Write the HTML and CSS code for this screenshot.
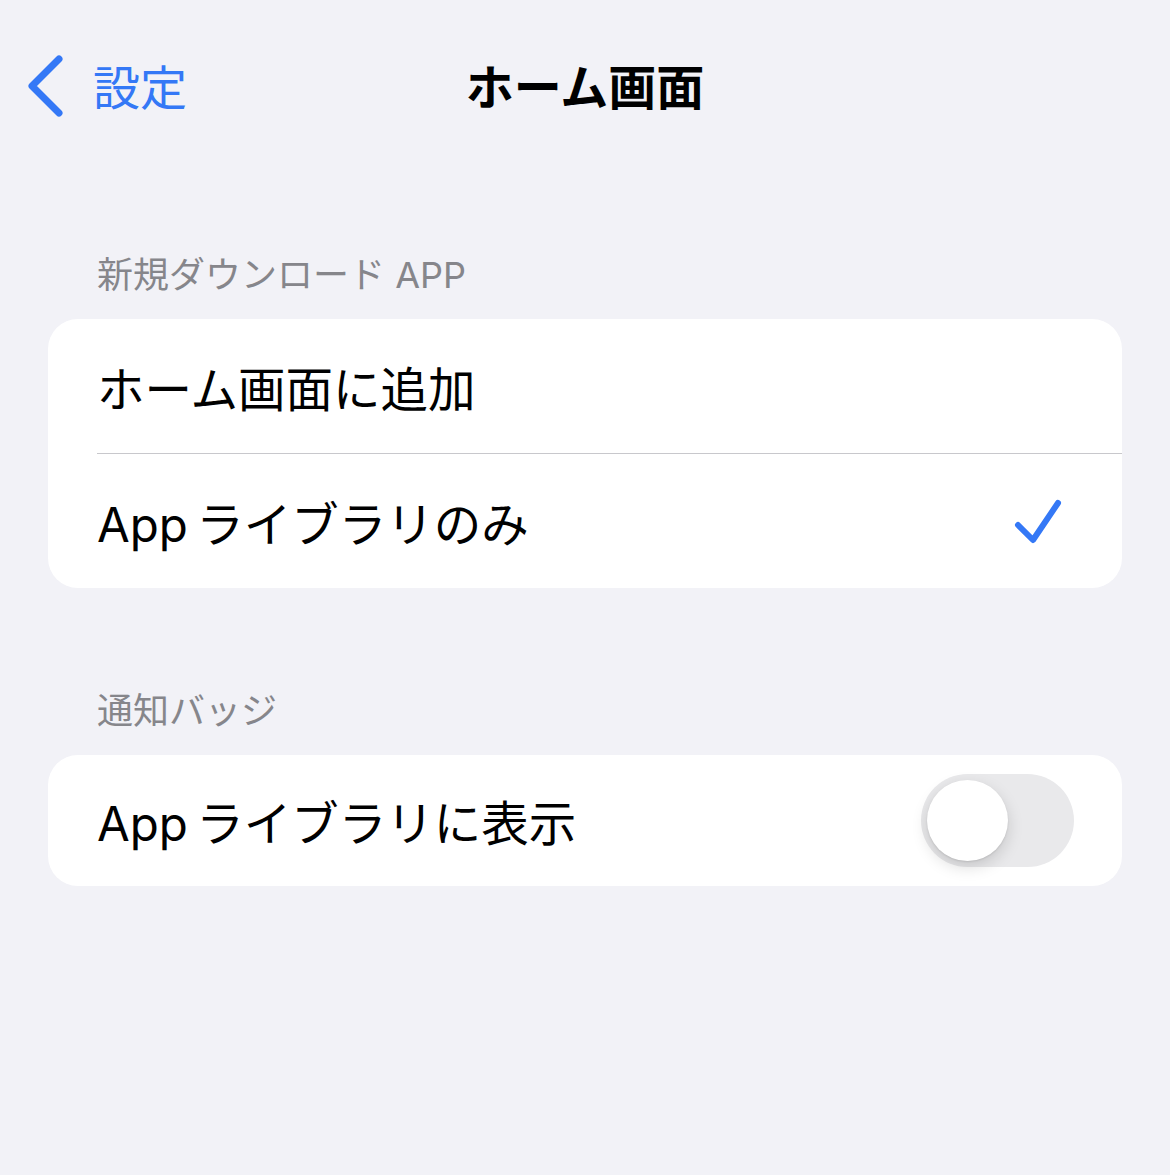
FILE: index.html
```html
<!DOCTYPE html>
<html lang="ja">

<head>
    <meta charset="UTF-8">
    <meta name="viewport" content="width=device-width, initial-scale=1.0">
    <title>ホーム画面</title>
    <link rel="stylesheet" href="styles.css">
</head>

<body>

    <!-- Navigation bar -->
    <div class="nav">
        <a href="#" class="back">
            <svg class="chevron" width="40" height="62" viewBox="0 0 40 62">
                <path d="M33 4 L6 31 L33 58" fill="none" stroke="#3478f6" stroke-width="7"
                      stroke-linecap="round" stroke-linejoin="round"/>
            </svg>
            <span>設定</span>
        </a>
        <h1>ホーム画面</h1>
        <div></div>
    </div>

    <!-- New downloads -->
    <div class="section-title first">新規ダウンロード APP</div>
    <div class="card">
        <div class="row">ホーム画面に追加</div>
        <div class="row">
            <span>App ライブラリのみ</span>
            <svg class="check" width="48" height="46" viewBox="0 0 48 46">
                <path d="M4 27 L19 42 L44 5" fill="none" stroke="#3478f6" stroke-width="6"
                      stroke-linecap="round" stroke-linejoin="round"/>
            </svg>
        </div>
    </div>

    <!-- Badges -->
    <div class="section-title">通知バッジ</div>
    <div class="card">
        <div class="row toggle-row">
            <span>App ライブラリに表示</span>
            <div class="toggle"><div class="knob"></div></div>
        </div>
    </div>

</body>

</html>
```

FILE: styles.css
```css
/* iOS grouped settings look */
body {
    font-family: 'Inter', 'Noto Sans CJK JP', sans-serif;
    margin: 0;
    padding: 0 48px;
    background: #f2f2f7;
    color: #000;
}

.nav {
    display: grid;
    grid-template-columns: 1fr auto 1fr;
    align-items: center;
    height: 168px;
    padding-bottom: 8px;
    margin: 0 -48px;
}

.back {
    display: flex;
    align-items: center;
    gap: 27px;
    padding-left: 26px;
    text-decoration: none;
    color: #3478f6;
    font-size: 47px;
}

.chevron {
    margin-top: 4px;
}

h1 {
    margin: 0;
    font-size: 48px;
    font-weight: bold;
}

.section-title {
    margin: 101px 0 22px;
    padding-left: 49px;
    font-size: 36px;
    line-height: 44px;
    color: #86868b;
}

.section-title.first {
    margin-top: 77px;
}

.card {
    background: #fff;
    border-radius: 30px;
    overflow: hidden;
}

.row {
    display: flex;
    align-items: center;
    justify-content: space-between;
    height: 134px;
    margin-left: 49px;
    padding-right: 60px;
    font-size: 47.5px;
    word-spacing: -5px;
}

.row + .row {
    border-top: 1px solid #c8c8cc;
}

.toggle-row {
    height: 131px;
    padding-right: 48px;
}

.toggle {
    width: 153px;
    height: 93px;
    border-radius: 47px;
    background: #e9e9eb;
    padding: 6px;
    box-sizing: border-box;
}

.knob {
    width: 81px;
    height: 81px;
    border-radius: 50%;
    background: #fff;
    box-shadow: 0 6px 16px rgba(0, 0, 0, 0.15), 0 1px 2px rgba(0, 0, 0, 0.1);
}
```
